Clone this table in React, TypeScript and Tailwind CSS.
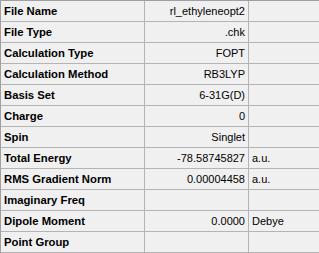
const rows: { label: string; value?: string; unit?: string }[] = [
  { label: "File Name", value: "rl_ethyleneopt2" },
  { label: "File Type", value: ".chk" },
  { label: "Calculation Type", value: "FOPT" },
  { label: "Calculation Method", value: "RB3LYP" },
  { label: "Basis Set", value: "6-31G(D)" },
  { label: "Charge", value: "0" },
  { label: "Spin", value: "Singlet" },
  { label: "Total Energy", value: "-78.58745827", unit: "a.u." },
  { label: "RMS Gradient Norm", value: "0.00004458", unit: "a.u." },
  { label: "Imaginary Freq" },
  { label: "Dipole Moment", value: "0.0000", unit: "Debye" },
  { label: "Point Group" },
]

export default function App() {
  return (
    <div
      className="w-[319px] h-[253px] bg-[#f0f0f0] border-t border-l border-[#a0a0a0] text-[11px] text-black"
      style={{ fontFamily: '"Liberation Sans", Arial, sans-serif' }}
    >
      {rows.map((r) => (
        <div key={r.label} className="flex h-[21px]">
          <div className="w-[144px] border-r border-b border-[#b4b4b4] pl-[3px] pt-px font-bold text-[11.3px] flex items-center">
            {r.label}
          </div>
          <div className="w-[104px] border-r border-b border-[#b4b4b4] pr-[3px] pt-px flex items-center justify-end">
            {r.value}
          </div>
          <div className="flex-1 border-b border-[#b4b4b4] pl-[3px] pt-px flex items-center">
            {r.unit}
          </div>
        </div>
      ))}
    </div>
  )
}
